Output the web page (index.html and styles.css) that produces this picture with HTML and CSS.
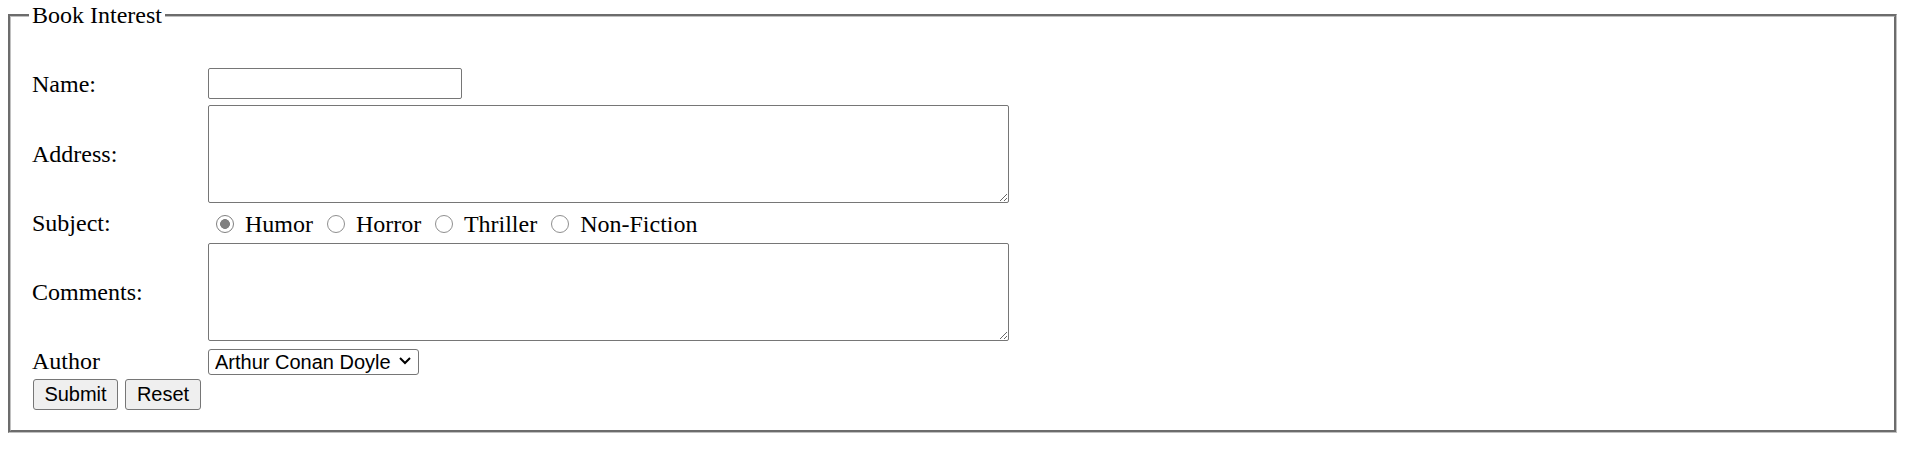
FILE: index.html
```html
<!DOCTYPE html>
<html lang="en">
<head>
<meta charset="utf-8">
<title>Book Interest</title>
<link rel="stylesheet" href="styles.css">
</head>
<body>
<form class="form">
  <fieldset class="box">
    <legend class="box-title">Book Interest</legend>
    <div class="grid">
      <label class="lbl" for="name">Name:</label>
      <input class="text-in" id="name" type="text">

      <label class="lbl" for="addr">Address:</label>
      <textarea class="area" id="addr"></textarea>

      <span class="lbl">Subject:</span>
      <div class="radios">
        <label class="opt"><input class="radio" type="radio" name="subject" checked> Humor</label>
        <label class="opt"><input class="radio" type="radio" name="subject"> Horror</label>
        <label class="opt"><input class="radio" type="radio" name="subject"> Thriller</label>
        <label class="opt"><input class="radio" type="radio" name="subject"> Non-Fiction</label>
      </div>

      <label class="lbl" for="comm">Comments:</label>
      <textarea class="area" id="comm"></textarea>

      <label class="lbl lbl-author" for="auth">Author</label>
      <div class="select-wrap">
        <select class="sel" id="auth">
          <option>Arthur Conan Doyle</option>
        </select>
        <svg class="chev" width="14" height="9" viewBox="0 0 14 9" aria-hidden="true">
          <path d="M2 2 L7 7 L12 2" fill="none" stroke="#000" stroke-width="2"/>
        </svg>
      </div>

      <div class="actions">
        <button class="btn btn-submit" type="submit">Submit</button>
        <button class="btn btn-reset" type="reset">Reset</button>
      </div>
    </div>
  </fieldset>
</form>
</body>
</html>
```

FILE: styles.css
```css
html, body {
  margin: 0;
  background: #fff;
}

body {
  padding-top: 1px;
  font-family: "Liberation Serif", "Times New Roman", serif;
  font-size: 24px;
  line-height: 28px;
  color: #000;
}

.form {
  margin: 0;
}

.box {
  margin: 0 15px 0 8px;
  padding: 39px 18px 20px 18px;
  border: 3px groove #c0c0c0;
  min-width: 0;
}

.box-title {
  padding: 0 3px;
  font-size: 24px;
  line-height: 28px;
}

.grid {
  display: grid;
  grid-template-columns: 176px 1fr;
  grid-template-rows: 31px 98px 28px 98px 26px 31px;
  row-gap: 6px;
  padding-left: 3px;
}

.lbl {
  align-self: center;
  font-size: 24px;
  line-height: 28px;
}

.lbl-author {
  margin-top: 1px;
}

.text-in {
  box-sizing: border-box;
  width: 254px;
  height: 31px;
  margin: 0;
  border: 1px solid #767676;
  border-radius: 2px;
  font: 20px "Liberation Sans", Arial, sans-serif;
  padding: 1px 3px;
}

.area {
  box-sizing: border-box;
  width: 801px;
  height: 98px;
  margin: 0;
  border: 1px solid #767676;
  border-radius: 2px;
  font: 20px "Liberation Mono", monospace;
  padding: 3px;
  align-self: start;
  display: block;
}

.radios {
  margin-top: 1px;
  height: 28px;
  white-space: nowrap;
  font-size: 24px;
  line-height: 28px;
}

.opt {
  display: inline;
}

.radio {
  -webkit-appearance: none;
  appearance: none;
  box-sizing: border-box;
  display: inline-block;
  width: 18px;
  height: 18px;
  margin: 0 5px 0 8px;
  border: 1px solid #8f8f8f;
  border-radius: 50%;
  background: #fff;
  vertical-align: -1px;
}

.radio:checked {
  border: 1.5px solid #808080;
  background: radial-gradient(circle, #808080 0 4.6px, #fff 5.2px);
}

.select-wrap {
  position: relative;
  width: 211px;
  height: 26px;
}

.sel {
  -webkit-appearance: none;
  appearance: none;
  box-sizing: border-box;
  width: 211px;
  height: 26px;
  margin: 0;
  border: 1px solid #767676;
  border-radius: 3px;
  background: #fff;
  color: #000;
  font: 20px/22px "Liberation Sans", Arial, sans-serif;
  padding: 0 0 0 6px;
}

.chev {
  position: absolute;
  right: 7px;
  top: 9px;
  pointer-events: none;
}

.actions {
  grid-column: 1 / 3;
  display: flex;
  gap: 7px;
  padding-left: 1px;
}

.btn {
  box-sizing: border-box;
  height: 31px;
  margin: 0;
  padding: 0;
  border: 1px solid #767676;
  border-radius: 3px;
  background: #efefef;
  color: #000;
  font: 20px "Liberation Sans", Arial, sans-serif;
}

.btn-submit {
  width: 85px;
}

.btn-reset {
  width: 76px;
}
```
